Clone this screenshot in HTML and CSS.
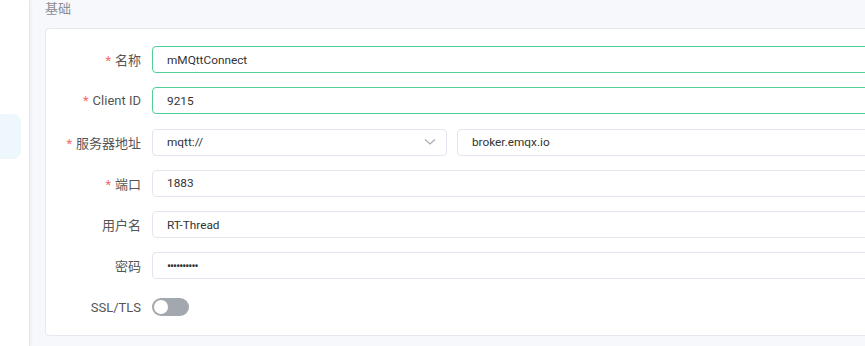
FILE: index.html
```html
<!DOCTYPE html>
<html lang="zh-CN">
<head>
    <meta charset="UTF-8">
    <meta name="viewport" content="width=device-width, initial-scale=1.0">
    <title>MQTT Connect</title>
    <link rel="stylesheet" href="styles.css">
</head>
<body>
    <aside class="sidebar">
        <div class="nav-item active"></div>
    </aside>
    <main class="main">
        <h2 class="section-title">基础</h2>
        <form class="card">
            <div class="form-row">
                <label class="required" for="name">名称</label>
                <input class="focused" type="text" id="name" value="mMQttConnect">
            </div>
            <div class="form-row">
                <label class="required" for="clientId">Client ID</label>
                <input class="focused" type="text" id="clientId" value="9215">
            </div>
            <div class="form-row">
                <label class="required" for="protocol">服务器地址</label>
                <div class="host-group">
                    <div class="select">
                        <span>mqtt://</span>
                        <svg width="12" height="8" viewBox="0 0 12 8"><path d="M1 1.5 L6 6 L11 1.5" fill="none" stroke="#a8abb2" stroke-width="1.2"/></svg>
                    </div>
                    <input type="text" id="host" value="broker.emqx.io">
                </div>
            </div>
            <div class="form-row">
                <label class="required" for="port">端口</label>
                <input type="text" id="port" value="1883">
            </div>
            <div class="form-row">
                <label for="username">用户名</label>
                <input type="text" id="username" value="RT-Thread">
            </div>
            <div class="form-row">
                <label for="password">密码</label>
                <input class="password" type="text" id="password" value="••••••••••">
            </div>
            <div class="form-row">
                <label for="ssl">SSL/TLS</label>
                <div class="switch"><span class="knob"></span></div>
            </div>
        </form>
    </main>
</body>
</html>
```

FILE: styles.css
```css
* {
    margin: 0;
    padding: 0;
    box-sizing: border-box;
    font-family: Roboto, 'Noto Sans CJK SC', sans-serif;
}

body {
    width: 865px;
    height: 346px;
    overflow: hidden;
    display: flex;
    background: #f7f8fc;
}

.sidebar {
    width: 30px;
    flex-shrink: 0;
    background: #fff;
    border-right: 1px solid #e6e8f0;
    box-shadow: 1px 0 3px rgba(30, 40, 90, 0.06);
    padding-top: 114px;
}

.nav-item {
    width: 21px;
    height: 45px;
    border-radius: 0 8px 8px 0;
}

.nav-item.active {
    background: #eef7fb;
}

.main {
    flex: 1;
    padding-left: 15px;
}

.section-title {
    font-size: 13px;
    font-weight: 400;
    color: #8a8d93;
    line-height: 18px;
    height: 28px;
}

.card {
    width: 1000px;
    background: #fff;
    border: 1px solid #e6e8f0;
    border-radius: 4px;
    padding: 17px 0 14px;
    display: flex;
    flex-direction: column;
    gap: 14.25px;
}

.form-row {
    display: grid;
    grid-template-columns: 106px 1fr;
    align-items: center;
    height: 27px;
}

label {
    text-align: right;
    padding-right: 11px;
    font-size: 13px;
    color: #555;
}

label.required::before {
    content: '*';
    color: #f56c6c;
    margin-right: 4px;
}

input,
.select {
    height: 27px;
    width: 100%;
    border: 1px solid #e4e5ef;
    border-radius: 4px;
    padding: 0 14px;
    font-size: 11.8px;
    color: #333;
    background: #fff;
    outline: none;
}

input.focused {
    border-color: #52cf95;
}

input.password {
    font-size: 12px;
    letter-spacing: -1px;
}

.host-group {
    display: flex;
    gap: 10px;
}

.select {
    width: 295px;
    flex-shrink: 0;
    display: flex;
    align-items: center;
    justify-content: space-between;
    padding-right: 10px;
}

.switch {
    width: 37px;
    height: 18px;
    border-radius: 9px;
    background: #a3a7ae;
    padding: 2px;
}

.knob {
    display: block;
    width: 14px;
    height: 14px;
    border-radius: 50%;
    background: #fff;
}
```
